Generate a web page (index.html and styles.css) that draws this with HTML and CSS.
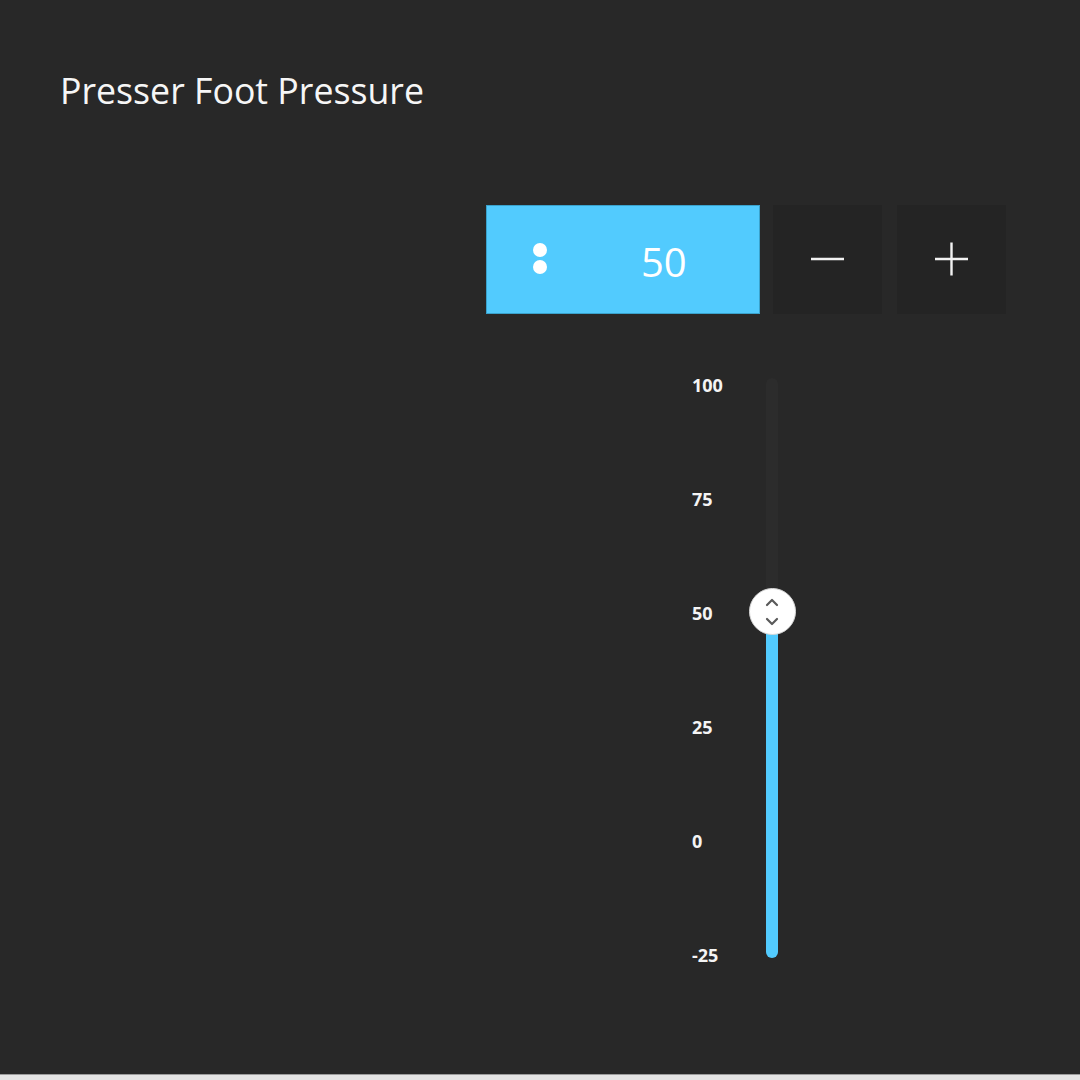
FILE: index.html
```html
<!DOCTYPE html>
<html>
<head>
<meta charset="utf-8">
<link rel="stylesheet" href="styles.css">
</head>
<body>
<div class="app">
  <h1 class="title">Presser Foot Pressure</h1>
  <div class="controls">
    <div class="value-box">
      <span class="dots"><span class="dot"></span><span class="dot"></span></span>
      <span class="value">50</span>
    </div>
    <button class="step-btn" aria-label="decrease">
      <svg width="37" height="37" viewBox="0 0 37 37"><path d="M2 18H35" stroke="#f2f2f2" stroke-width="2.4"/></svg>
    </button>
    <button class="step-btn" aria-label="increase">
      <svg width="37" height="37" viewBox="0 0 37 37"><path d="M2 18H35M18.5 1.5V34.5" stroke="#f2f2f2" stroke-width="2.4"/></svg>
    </button>
  </div>
  <div class="slider">
    <div class="labels">
      <span>100</span>
      <span>75</span>
      <span>50</span>
      <span>25</span>
      <span>0</span>
      <span>-25</span>
    </div>
    <div class="track">
      <div class="fill" style="height: 60%;"></div>
      <div class="thumb" style="bottom: 60%;">
        <svg width="20" height="32" viewBox="0 0 20 32"><path d="M5 9L10 4L15 9M5 23L10 28L15 23" fill="none" stroke="#5a5a5a" stroke-width="2.2" stroke-linecap="round" stroke-linejoin="round"/></svg>
      </div>
    </div>
  </div>
</div>
</body>
</html>
```
FILE: styles.css
```css
* { box-sizing: border-box; }
html, body { margin: 0; padding: 0; }
body {
  background: #e4e4e4;
  font-family: "Open Sans", "Noto Sans", sans-serif;
  color: #f4f4f4;
}
.app {
  height: 1075px;
  background: #282828;
  border-bottom: 1px solid #9c9c9c;
  padding-top: 70px;
  overflow: hidden;
}
.title {
  margin: 0 0 0 60px;
  font-size: 35.7px;
  font-weight: 400;
  line-height: 40px;
  color: #f6f6f6;
}
.controls {
  display: flex;
  justify-content: flex-end;
  padding-right: 74px;
  margin-top: 95px;
  height: 109px;
}
.value-box {
  width: 274px;
  height: 109px;
  background: #52cbfe;
  border: 1px solid #3aa2cc;
  display: flex;
  align-items: center;
  position: relative;
}
.dots {
  display: flex;
  flex-direction: column;
  gap: 3px;
  margin-left: 46px;
  margin-top: -2px;
}
.dot {
  width: 14px;
  height: 14px;
  border-radius: 50%;
  background: #ffffff;
}
.value {
  font-size: 40px;
  line-height: 1;
  margin-left: 94px;
  margin-top: 4px;
  color: #ffffff;
}
.step-btn {
  width: 109px;
  height: 109px;
  background: #242424;
  border: none;
  margin-left: 13px;
  padding: 0;
  display: flex;
  align-items: center;
  justify-content: center;
}
.step-btn + .step-btn { margin-left: 15px; }
.slider {
  display: flex;
  margin-left: 692px;
  margin-top: 62px;
}
.labels {
  width: 74px;
  height: 588px;
  display: flex;
  flex-direction: column;
  justify-content: space-between;
  font-size: 18px;
  font-weight: 700;
  line-height: 18px;
  color: #f4f4f4;
}
.track {
  position: relative;
  width: 12px;
  height: 580px;
  margin-top: 2px;
  border-radius: 6px;
  background: #2c2c2c;
}
.fill {
  position: absolute;
  left: 0;
  right: 0;
  bottom: 0;
  background: #52cbfe;
  border-radius: 0 0 6px 6px;
}
.thumb {
  position: absolute;
  left: 50%;
  width: 47px;
  height: 47px;
  margin-left: -23.5px;
  margin-bottom: -25px;
  border-radius: 50%;
  background: #ffffff;
  border: 1px solid #d8d8d8;
  display: flex;
  align-items: center;
  justify-content: center;
}
```
